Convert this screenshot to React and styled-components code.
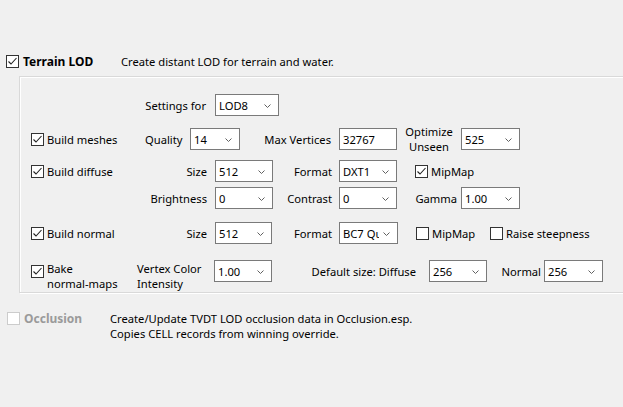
import React from 'react'
import styled, { createGlobalStyle } from 'styled-components'

const Global = createGlobalStyle`
  html, body {
    margin: 0;
    background: #f0f0f0;
  }
  body {
    font-family: "Noto Sans", "Open Sans", sans-serif;
    font-size: 11.2px;
    color: #000;
    width: 623px;
    height: 407px;
    overflow: hidden;
  }
`

const Page = styled.div`
  padding-top: 54px;
`

const Header = styled.div`
  display: flex;
  align-items: ${(p) => (p.top ? 'flex-start' : 'center')};
  padding-left: ${(p) => p.indent}px;
  margin-top: ${(p) => p.mt || 0}px;
  line-height: 15px;
`

const TitleCell = styled.div`
  display: flex;
  align-items: ${(p) => (p.top ? 'flex-start' : 'center')};
  width: ${(p) => p.w}px;
  flex-shrink: 0;
`

const Title = styled.span`
  font-weight: bold;
  font-size: 12px;
  margin-left: 4px;
  color: ${(p) => (p.disabled ? '#9a9a9a' : '#000')};
`

const Desc = styled.div`
  white-space: pre;
`

const Panel = styled.div`
  margin: 7px 0 0 19px;
  width: 596px;
  border: 1px solid #d9d9d9;
  box-shadow: inset 1px 1px 0 #fff, 1px 1px 0 #fff;
  padding: 0 0 10px 11px;
`

const Row = styled.div`
  display: flex;
  align-items: center;
  height: 22px;
  margin-top: ${(p) => p.mt}px;
  line-height: 15px;
  white-space: nowrap;
`

const Cell = styled.div`
  width: ${(p) => p.w}px;
  flex-shrink: 0;
  text-align: ${(p) => p.align || 'left'};
  padding-right: ${(p) => p.pr || 0}px;
  box-sizing: border-box;
  white-space: pre;
  align-self: ${(p) => (p.low ? 'flex-start' : 'center')};
  margin-top: ${(p) => (p.low ? 1 : 0)}px;
`

const CheckCell = styled.div`
  display: flex;
  align-items: center;
  width: ${(p) => p.w}px;
  flex-shrink: 0;
  align-self: stretch;
`

const CheckText = styled.span`
  margin-left: 3px;
  white-space: pre;
  align-self: ${(p) => (p.low ? 'flex-start' : 'center')};
  margin-top: ${(p) => (p.low ? 1 : 0)}px;
`

const Box = styled.span`
  display: inline-flex;
  width: 13px;
  height: 13px;
  box-sizing: border-box;
  border: 1px solid ${(p) => (p.disabled ? '#cccccc' : '#333333')};
  background: #fff;
  flex-shrink: 0;
  margin-top: ${(p) => p.mt || 0}px;
  svg {
    display: block;
  }
`

const Field = styled.div`
  width: ${(p) => p.w}px;
  height: 22px;
  flex-shrink: 0;
  box-sizing: border-box;
  border: 1px solid #7a7a7a;
  background: #fff;
  display: flex;
  align-items: center;
  padding-left: 3px;
  overflow: hidden;
`

const FieldText = styled.span`
  flex: 1;
  min-width: 0;
  overflow: hidden;
  white-space: nowrap;
`

const Chevron = styled.svg`
  flex-shrink: 0;
  margin: 1px 7px 0 4px;
`

const Spacer = styled.div`
  width: ${(p) => p.w}px;
  flex-shrink: 0;
`

const Check = ({ checked = true, disabled, mt }) => (
  <Box disabled={disabled} mt={mt}>
    {checked && (
      <svg width="11" height="11" viewBox="0 0 11 11">
        <polyline points="1.5,5.5 4,8 9.5,2" fill="none" stroke="#222" strokeWidth="1.1" />
      </svg>
    )}
  </Box>
)

const Combo = ({ w, value }) => (
  <Field w={w}>
    <FieldText>{value}</FieldText>
    <Chevron width="7" height="4" viewBox="0 0 7 4">
      <polyline points="0.5,0.5 3.5,3.5 6.5,0.5" fill="none" stroke="#606060" strokeWidth="1" />
    </Chevron>
  </Field>
)

const Edit = ({ w, value }) => (
  <Field w={w}>
    <FieldText>{value}</FieldText>
  </Field>
)

const CheckLabel = ({ w, text, checked, low }) => (
  <CheckCell w={w}>
    <Check checked={checked} />
    <CheckText low={low}>{text}</CheckText>
  </CheckCell>
)

export default function App() {
  return (
    <Page>
      <Global />
      <Header indent={6}>
        <TitleCell w={115}>
          <Check />
          <Title>Terrain LOD</Title>
        </TitleCell>
        <Desc>Create distant LOD for terrain and water.</Desc>
      </Header>

      <Panel>
        <Row mt={17}>
          <Spacer w={114} />
          <Cell w={70} align="right" pr={9}>Settings for</Cell>
          <Combo w={64} value="LOD8" />
        </Row>

        <Row mt={12}>
          <CheckLabel w={114} text="Build meshes" />
          <Cell w={45}>Quality</Cell>
          <Combo w={50} value="14" />
          <Cell w={99} align="right" pr={8}>Max Vertices</Cell>
          <Edit w={58} value="32767" />
          <Cell w={64} align="center">{'Optimize\nUnseen'}</Cell>
          <Combo w={59} value="525" />
        </Row>

        <Row mt={10}>
          <CheckLabel w={114} text="Build diffuse" />
          <Cell w={70} align="right" pr={8}>Size</Cell>
          <Combo w={58} value="512" />
          <Cell w={66} align="right" pr={7}>Format</Cell>
          <Combo w={58} value="DXT1" />
          <Spacer w={18} />
          <CheckLabel w={80} text="MipMap" />
        </Row>

        <Row mt={5}>
          <Spacer w={114} />
          <Cell w={70} align="right" pr={8}>Brightness</Cell>
          <Combo w={58} value="0" />
          <Cell w={66} align="right" pr={7}>Contrast</Cell>
          <Combo w={58} value="0" />
          <Cell w={64} align="right" pr={4}>Gamma</Cell>
          <Combo w={59} value="1.00" />
        </Row>

        <Row mt={13}>
          <CheckLabel w={114} text="Build normal" />
          <Cell w={70} align="right" pr={8}>Size</Cell>
          <Combo w={57} value="512" />
          <Cell w={67} align="right" pr={7}>Format</Cell>
          <Combo w={59} value="BC7 Quality" />
          <Spacer w={18} />
          <CheckLabel w={74} text="MipMap" checked={false} />
          <CheckLabel w={110} text="Raise steepness" checked={false} />
        </Row>

        <Row mt={16}>
          <CheckLabel w={106} text={'Bake\nnormal-maps'} low />
          <Cell w={77} low>{'Vertex Color\nIntensity'}</Cell>
          <Combo w={58} value="1.00" />
          <Cell w={157} align="right" pr={13}>Default size: Diffuse</Cell>
          <Combo w={58} value="256" />
          <Cell w={57} align="right" pr={3}>Normal</Cell>
          <Combo w={59} value="256" />
        </Row>
      </Panel>

      <Header indent={7} mt={18} top>
        <TitleCell w={103} top>
          <Check checked={false} disabled mt={1} />
          <Title disabled>Occlusion</Title>
        </TitleCell>
        <Desc>{'Create/Update TVDT LOD occlusion data in Occlusion.esp.\nCopies CELL records from winning override.'}</Desc>
      </Header>
    </Page>
  )
}
